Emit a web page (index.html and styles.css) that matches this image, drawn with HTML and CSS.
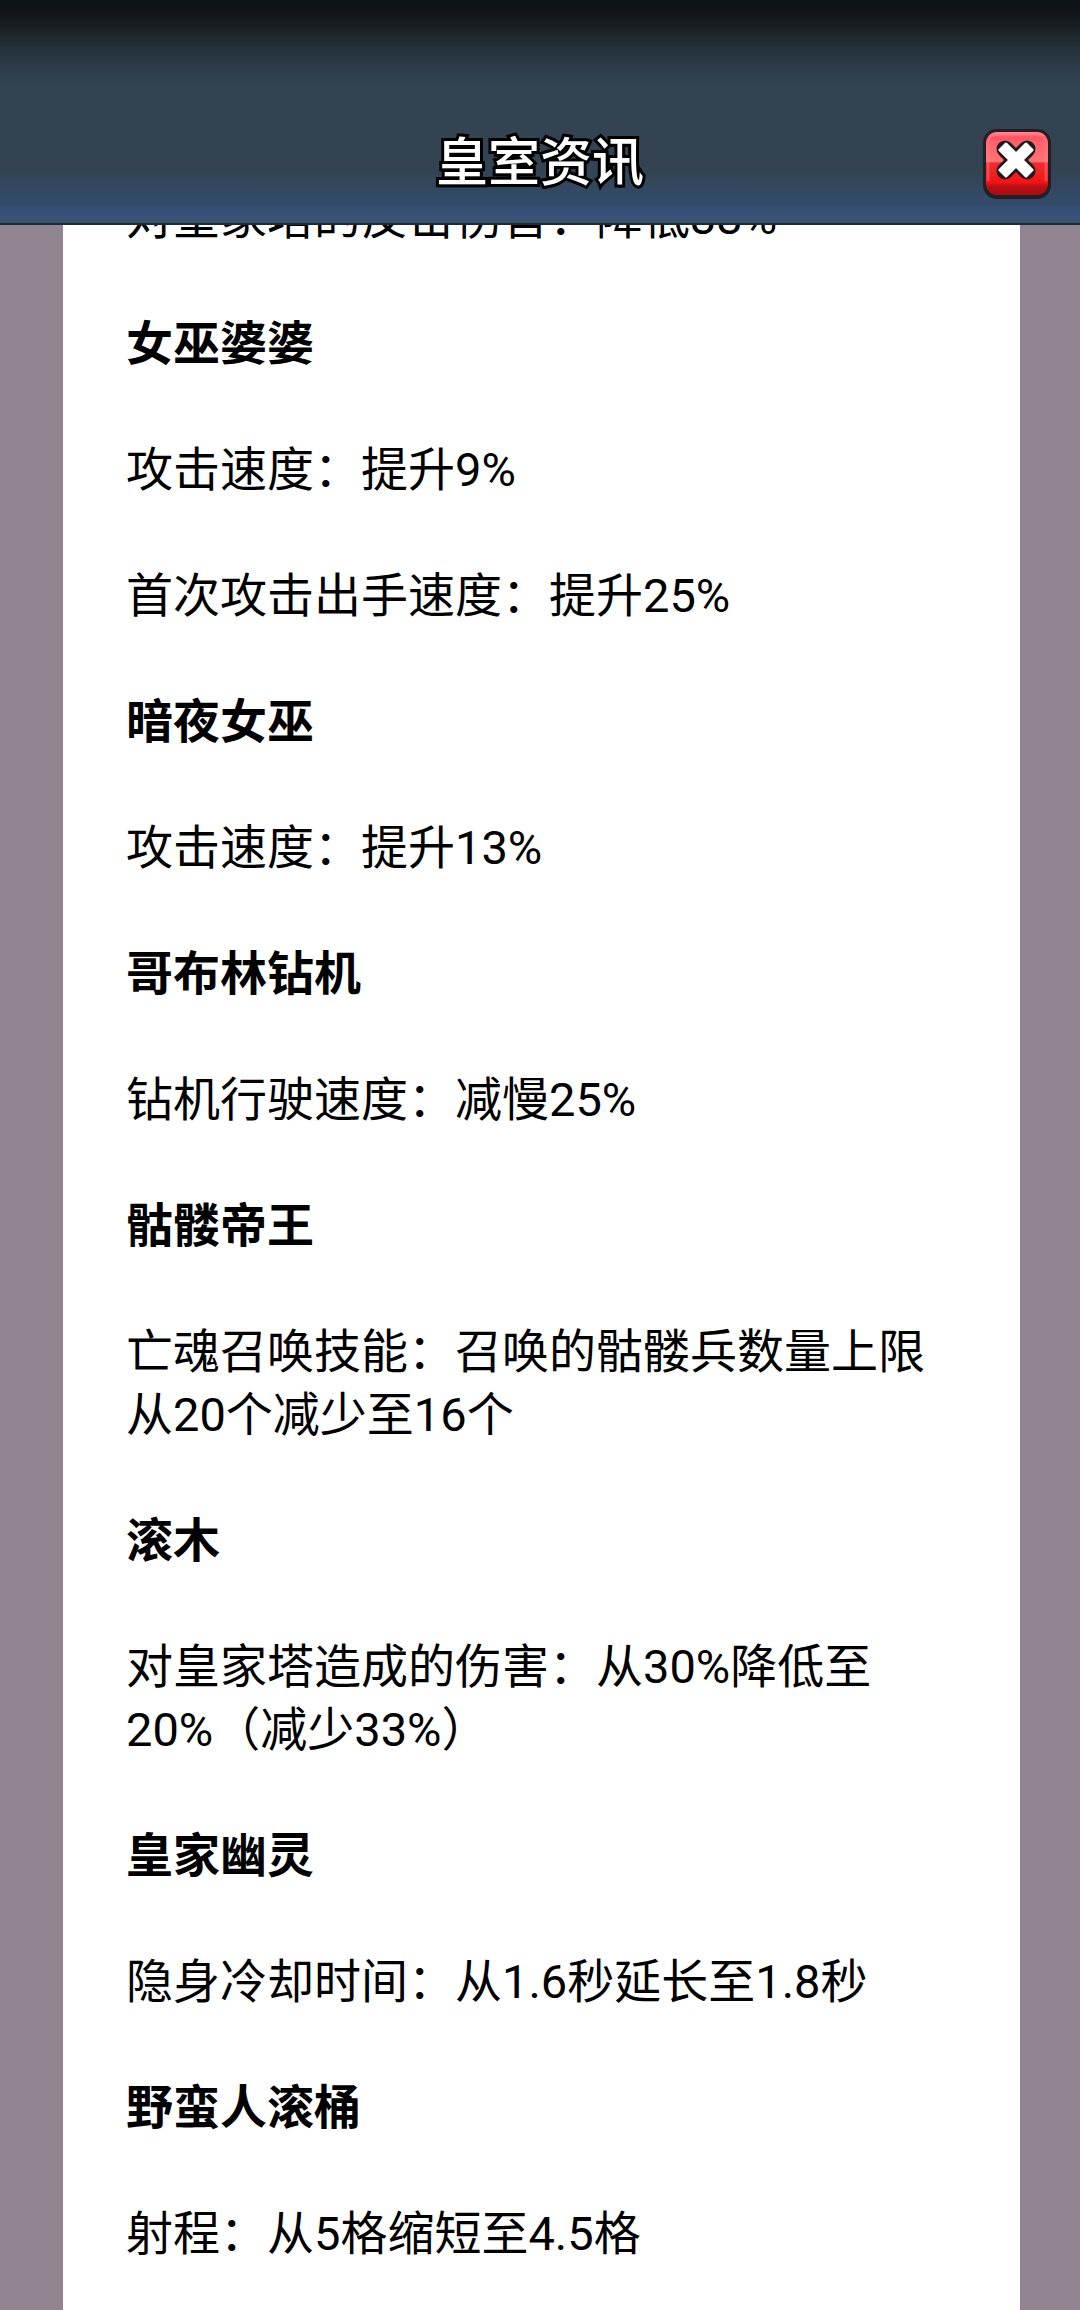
FILE: index.html
```
<!DOCTYPE html>
<html lang="zh-CN">
<head>
  <meta charset="UTF-8" />
  <meta name="viewport" content="width=device-width, initial-scale=1" />
  <title>皇室资讯</title>
  <link rel="stylesheet" href="styles.css">
</head>
<body>
  <header class="topbar">
    <h1 class="title">皇室资讯</h1>
    <button class="close" type="button" aria-label="关闭">
      <svg viewBox="0 0 70 70" aria-hidden="true">
        <defs>
          <linearGradient id="red" x1="0" y1="0" x2="0" y2="1">
            <stop offset="0" stop-color="#ff8a94" />
            <stop offset="0.08" stop-color="#fb5364" />
            <stop offset="0.15" stop-color="#ff6069" />
            <stop offset="0.47" stop-color="#ff7374" />
            <stop offset="0.49" stop-color="#f02d30" />
            <stop offset="0.8" stop-color="#f11416" />
            <stop offset="0.87" stop-color="#b80f14" />
            <stop offset="1" stop-color="#a90d12" />
          </linearGradient>
        </defs>
        <rect x="1" y="0" width="68" height="70" rx="14" fill="#251e25" />
        <rect x="4" y="3" width="62" height="63" rx="11" fill="url(#red)" />
        <path d="M6 52V15Q6 5 16 5H54Q64 5 64 15V52" fill="none" stroke="#ff8791" stroke-width="3" opacity="0.4" />
        <path d="M23 20L45 42M45 20L23 42" stroke="#24191c" stroke-width="17" stroke-linecap="round" />
        <path d="M24 15L34 25L44 15L50 21L40 31L50 41L44 47L34 37L24 47L18 41L28 31L18 21Z" fill="#fff" stroke="#fff" stroke-width="3" stroke-linejoin="round" />
      </svg>
    </button>
  </header>

  <main class="content">
    <article class="news">
      <p>对皇家塔的反击伤害：降低33%</p>

      <h2>女巫婆婆</h2>
      <p>攻击速度：提升9%</p>
      <p>首次攻击出手速度：提升25%</p>

      <h2>暗夜女巫</h2>
      <p>攻击速度：提升13%</p>

      <h2>哥布林钻机</h2>
      <p>钻机行驶速度：减慢25%</p>

      <h2>骷髅帝王</h2>
      <p>亡魂召唤技能：召唤的骷髅兵数量上限从20个减少至16个</p>

      <h2>滚木</h2>
      <p>对皇家塔造成的伤害：从30%降低至20%（减少33%）</p>

      <h2>皇家幽灵</h2>
      <p>隐身冷却时间：从1.6秒延长至1.8秒</p>

      <h2>野蛮人滚桶</h2>
      <p>射程：从5格缩短至4.5格</p>
    </article>
  </main>
</body>
</html>
```
FILE: styles.css
```
* {
  box-sizing: border-box;
}
body {
  margin: 0;
  height: 100vh;
  display: flex;
  flex-direction: column;
  overflow: hidden;
  background-color: #918592;
  font-family: Roboto, "Noto Sans CJK SC", sans-serif;
  color: #000;
}
.topbar {
  display: grid;
  grid-template-columns: 1fr auto 1fr;
  align-items: center;
  padding: 105px 28px 0;
  height: 225px;
  flex: none;
  border-bottom: 2px solid #1c2a3a;
  background: linear-gradient(#0d1119 0, #14181c 17px, #212c33 42px, #2c3a4a 65px, #334352 85px, #334352 168px, #334a69 202px, #37527a 214px, #3c516b 223px);
}
.title {
  grid-column: 2;
  margin: 0;
  font-size: 52px;
  line-height: 64px;
  font-weight: 500;
  color: #fff;
  -webkit-text-stroke: 6px #000;
  paint-order: stroke fill;
  text-shadow: 0 3px 0 #000;
}
.close {
  justify-self: end;
  width: 70px;
  height: 70px;
  padding: 0;
  border: none;
  background: none;
  cursor: pointer;
}
.close svg {
  display: block;
}
.content {
  flex: 1;
  min-height: 0;
  overflow: hidden;
  padding: 0 60px 0 63px;
}
/* list is scrolled, the first line sits half under the bar */
.news {
  margin-top: -39px;
  padding: 0 63px 63px;
  background-color: #fff;
  font-size: 47px;
  line-height: 63px;
}
.news h2,
.news p {
  margin: 0 0 63px;
  font-size: 47px;
}
.news h2 {
  font-weight: bold;
}
```
